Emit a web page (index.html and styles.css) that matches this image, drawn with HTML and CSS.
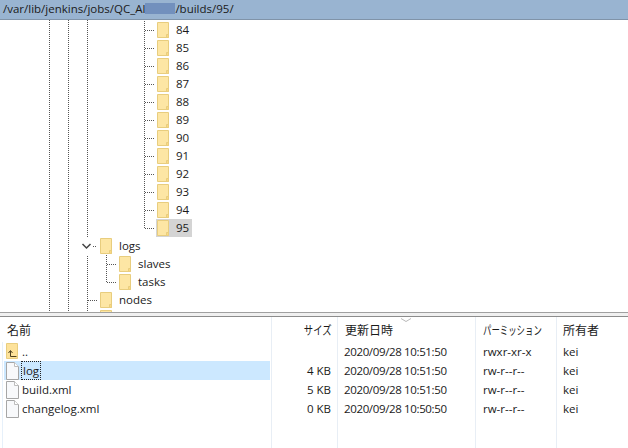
FILE: index.html
```html
<!DOCTYPE html>
<html>
<head>
    <title>/var/lib/jenkins/jobs/builds/95/</title>
    <link rel="stylesheet" href="styles.css">
</head>
<body>
    <svg class="defs" width="0" height="0">
        <symbol id="folder" viewBox="0 0 13 16">
            <path d="M.5.5h11v15H.5z" fill="#fde6a4" stroke="#e8cd7e"/>
            <path d="M9.500 15.500v-3h2v3z" fill="#fbd981" stroke="#e8cd7e"/>
        </symbol>
        <symbol id="file" viewBox="0 0 13 18">
            <path d="M.5.5h8l4 4v13H.500z" fill="#f8f9fb" stroke="#a6a6a6"/>
            <path d="M8.500.5v4h4" fill="#fff" stroke="#bdbdbd"/>
        </symbol>
    </svg>

    <div class="path-bar">/var/lib/jenkins/jobs/QC_Al<span class="blur"></span>/builds/95/</div>

    <div class="tree">
        <div class="builds">
            <div class="row lvl-build"><i class="conn"></i><span class="node"><svg class="ico"><use href="#folder"/></svg><span class="label">84</span></span></div>
            <div class="row lvl-build"><i class="conn"></i><span class="node"><svg class="ico"><use href="#folder"/></svg><span class="label">85</span></span></div>
            <div class="row lvl-build"><i class="conn"></i><span class="node"><svg class="ico"><use href="#folder"/></svg><span class="label">86</span></span></div>
            <div class="row lvl-build"><i class="conn"></i><span class="node"><svg class="ico"><use href="#folder"/></svg><span class="label">87</span></span></div>
            <div class="row lvl-build"><i class="conn"></i><span class="node"><svg class="ico"><use href="#folder"/></svg><span class="label">88</span></span></div>
            <div class="row lvl-build"><i class="conn"></i><span class="node"><svg class="ico"><use href="#folder"/></svg><span class="label">89</span></span></div>
            <div class="row lvl-build"><i class="conn"></i><span class="node"><svg class="ico"><use href="#folder"/></svg><span class="label">90</span></span></div>
            <div class="row lvl-build"><i class="conn"></i><span class="node"><svg class="ico"><use href="#folder"/></svg><span class="label">91</span></span></div>
            <div class="row lvl-build"><i class="conn"></i><span class="node"><svg class="ico"><use href="#folder"/></svg><span class="label">92</span></span></div>
            <div class="row lvl-build"><i class="conn"></i><span class="node"><svg class="ico"><use href="#folder"/></svg><span class="label">93</span></span></div>
            <div class="row lvl-build"><i class="conn"></i><span class="node"><svg class="ico"><use href="#folder"/></svg><span class="label">94</span></span></div>
            <div class="row lvl-build"><i class="conn"></i><span class="node current"><svg class="ico"><use href="#folder"/></svg><span class="label">95</span></span></div>
        </div>
        <div class="row lvl-logs">
            <svg class="chevron" width="14" height="18" viewBox="0 0 14 18"><path d="M3.500 7l4 4 4-4" fill="none" stroke="#444" stroke-width="1.500"/></svg>
            <i class="conn short"></i>
            <span class="node"><svg class="ico"><use href="#folder"/></svg><span class="label">logs</span></span>
        </div>
        <div class="log-kids">
            <div class="row lvl-kid"><i class="conn"></i><span class="node"><svg class="ico"><use href="#folder"/></svg><span class="label">slaves</span></span></div>
            <div class="row lvl-kid"><i class="conn"></i><span class="node"><svg class="ico"><use href="#folder"/></svg><span class="label">tasks</span></span></div>
        </div>
        <div class="row lvl-top"><i class="conn"></i><span class="node"><svg class="ico"><use href="#folder"/></svg><span class="label">nodes</span></span></div>
        <div class="row lvl-top"><i class="conn"></i><span class="node"><svg class="ico"><use href="#folder"/></svg></span></div>
    </div>

    <div class="splitter"></div>

    <div class="list">
        <div class="cols head">
            <div class="name">名前</div>
            <div class="size"><span class="narrow right">サイズ</span></div>
            <div class="date">更新日時<svg class="sort" width="12" height="5" viewBox="0 0 12 5"><path d="M1 .5l5 3 5-3" fill="none" stroke="#b8b8b8"/></svg></div>
            <div class="perm"><span class="narrow">パーミッション</span></div>
            <div class="owner">所有者</div>
        </div>
        <div class="cols file-row">
            <div class="name"><svg class="ico-up" width="13" height="17" viewBox="0 0 13 17"><path d="M.5.500h11v15H.5z" fill="#fde29a" stroke="#e8cd7e"/><path d="M4.500 8v5.500h6M2.500 10l2-2.500 2 2.500" fill="none" stroke="#4d4020"/></svg><span>..</span></div>
            <div class="size"></div>
            <div class="date stamp">2020/09/28 10:51:50</div>
            <div class="perm">rwxr-xr-x</div>
            <div class="owner">kei</div>
        </div>
        <div class="cols file-row">
            <div class="name selected"><svg class="ico-file"><use href="#file"/></svg><span class="focus">log</span></div>
            <div class="size">4 KB</div>
            <div class="date stamp">2020/09/28 10:51:50</div>
            <div class="perm">rw-r--r--</div>
            <div class="owner">kei</div>
        </div>
        <div class="cols file-row">
            <div class="name"><svg class="ico-file"><use href="#file"/></svg><span>build.xml</span></div>
            <div class="size">5 KB</div>
            <div class="date stamp">2020/09/28 10:51:50</div>
            <div class="perm">rw-r--r--</div>
            <div class="owner">kei</div>
        </div>
        <div class="cols file-row">
            <div class="name"><svg class="ico-file"><use href="#file"/></svg><span>changelog.xml</span></div>
            <div class="size">0 KB</div>
            <div class="date stamp">2020/09/28 10:50:50</div>
            <div class="perm">rw-r--r--</div>
            <div class="owner">kei</div>
        </div>
    </div>
</body>
</html>
```

FILE: styles.css
```css
html, body {
    height: 100%;
}
body {
    margin: 0;
    display: flex;
    flex-direction: column;
    overflow: hidden;
    background: #fff;
    color: #1a1a1a;
    font-family: "Open Sans", "Noto Sans CJK JP", sans-serif;
    font-size: 11.5px;
}
.defs {
    position: absolute;
}

.path-bar {
    height: 19px;
    line-height: 18px;
    padding-left: 3px;
    background-color: #99b4d1;
    border-bottom: 1px solid #8093a8;
    white-space: nowrap;
    flex: none;
}
.blur {
    display: inline-block;
    width: 30px;
    height: 11px;
    vertical-align: -1px;
    background-color: #7290bd;
}

/* tree */
.tree {
    height: 292px;
    flex: none;
    padding-top: 1px;
    box-sizing: border-box;
    overflow: hidden;
    background:
        repeating-linear-gradient(to bottom, #555 0 1px, transparent 1px 2px) 49px 0 / 1px 100% no-repeat,
        repeating-linear-gradient(to bottom, #555 0 1px, transparent 1px 2px) 68px 0 / 1px 100% no-repeat,
        repeating-linear-gradient(to bottom, #555 0 1px, transparent 1px 2px) 87px 0 / 1px 100% no-repeat;
}
.builds {
    background: repeating-linear-gradient(to bottom, #555 0 1px, transparent 1px 2px) 144px 0 / 1px calc(100% - 9px) no-repeat;
}
.log-kids {
    background: repeating-linear-gradient(to bottom, #555 0 1px, transparent 1px 2px) 106px 0 / 1px calc(100% - 9px) no-repeat;
}
.row {
    display: flex;
    align-items: center;
    height: 18px;
}
.lvl-build {
    padding-left: 145px;
}
.lvl-kid {
    padding-left: 107px;
}
.lvl-top {
    padding-left: 88px;
}
.lvl-logs {
    padding-left: 79px;
}
.conn {
    width: 10px;
    height: 1px;
    margin-right: 1px;
    flex: none;
    background: repeating-linear-gradient(to right, #555 0 1px, transparent 1px 2px);
}
.conn.short {
    width: 4px;
    margin-right: 2px;
}
.chevron {
    flex: none;
    background-color: #fff;
}
.node {
    display: flex;
    align-items: center;
    height: 18px;
    padding: 0 1px;
}
.node.current {
    background-color: #d4d4d4;
    padding-right: 3px;
}
.label {
    padding-bottom: 2px;
}
.ico {
    width: 13px;
    height: 16px;
    margin-right: 6px;
    flex: none;
}

.splitter {
    height: 3px;
    flex: none;
    background-color: #f0f0f0;
    border-top: 1px solid #a0a0a0;
    border-bottom: 1px solid #8c8c8c;
}

/* file list */
.list {
    flex: 1;
    background:
        linear-gradient(#e6f0fa, #e6f0fa) 2px 25px / 1px 100% no-repeat,
        linear-gradient(#e8eef5, #e8eef5) 271px 0 / 1px 100% no-repeat,
        linear-gradient(#e8eef5, #e8eef5) 337px 0 / 1px 100% no-repeat,
        linear-gradient(#e8eef5, #e8eef5) 475px 0 / 1px 100% no-repeat,
        linear-gradient(#e8eef5, #e8eef5) 556px 0 / 1px 100% no-repeat;
}
.cols {
    display: grid;
    grid-template-columns: 271px 66px 138px 81px 72px;
    align-items: center;
}
.head {
    height: 25px;
    font-size: 12px;
    white-space: nowrap;
}
.head .name {
    padding-left: 3px;
}
.head .date {
    padding-left: 8px;
}
.head .size {
    padding-right: 5px;
}
.narrow {
    display: inline-block;
    transform: scaleX(.7);
    transform-origin: left center;
}
.narrow.right {
    transform: scaleX(.78);
    transform-origin: right center;
}
.file-row {
    height: 19px;
}
.name {
    display: flex;
    align-items: center;
    height: 100%;
    margin-left: 4px;
    margin-right: 1px;
    padding-left: 2px;
}
.selected {
    background-color: #cce8ff;
}
.ico-up {
    margin-right: 3px;
    flex: none;
}
.ico-file {
    width: 13px;
    height: 18px;
    margin-right: 3px;
    flex: none;
}
.focus {
    padding: 0 1px;
    line-height: 17px;
    outline: 1px dotted #222;
}
.size {
    text-align: right;
    padding-right: 6px;
}
.date {
    position: relative;
    padding-left: 7px;
}
.stamp {
    letter-spacing: -.36px;
}
.sort {
    position: absolute;
    left: 63px;
    top: -3px;
}
.perm {
    padding-left: 8px;
}
.owner {
    padding-left: 7px;
}
```
